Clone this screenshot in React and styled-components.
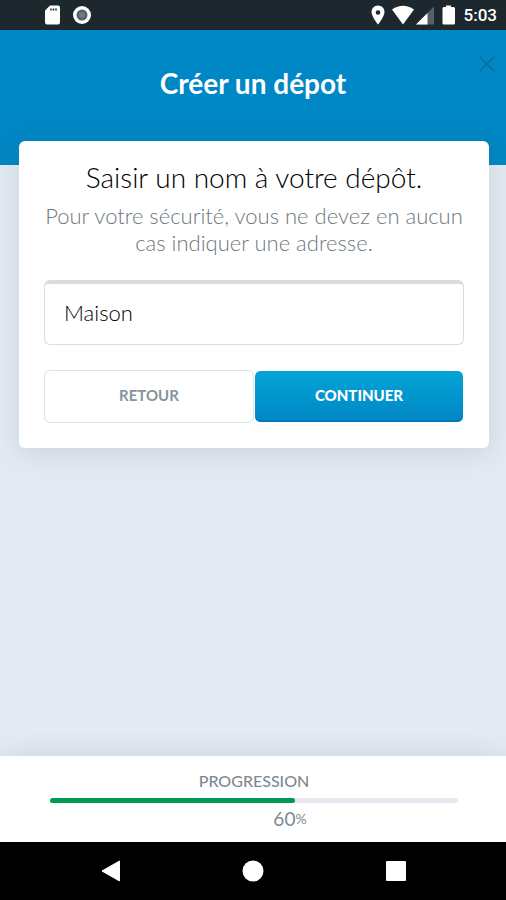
import React, { useState } from "react";
import styled, { createGlobalStyle } from "styled-components";

const GlobalStyle = createGlobalStyle`
  *, *::before, *::after { box-sizing: border-box; }
  body { margin: 0; }
  h1, h2, p { margin: 0; }
  button, input { font: inherit; }
`;

const Screen = styled.div`
  display: flex;
  flex-direction: column;
  min-height: 100vh;
  background: #e3eaf2;
  color: #000;
  font-family: Lato, "Liberation Sans", sans-serif;
`;

const StatusBar = styled.div`
  display: flex;
  align-items: center;
  justify-content: space-between;
  height: 30px;
  padding: 0 9px 0 44px;
  background: #1d272e;
  color: #fff;
`;

const StatusGroup = styled.div`
  display: flex;
  align-items: center;
  gap: ${({ $gap }) => $gap}px;
`;

const Clock = styled.time`
  margin-left: 2px;
  font: 500 17px/30px Roboto, sans-serif;
`;

const Header = styled.header`
  display: flex;
  flex-direction: column;
  height: 135px;
  padding: 20px 10px 0;
  background: #0087c5;
  color: #fff;
  text-align: center;
`;

const CloseButton = styled.button`
  display: flex;
  align-self: flex-end;
  padding: 5px 0;
  border: 0;
  background: none;
  color: #0a6b9e;
  cursor: pointer;
`;

const Title = styled.h1`
  margin-top: -13px;
  font-size: 28px;
  font-weight: 700;
  line-height: 36px;
`;

const Card = styled.main`
  margin: -24px 17px 0 19px;
  padding: 18px 25px 25px;
  border-radius: 6px;
  background: #fff;
  box-shadow: 0 4px 28px rgba(60, 84, 100, 0.16);
  text-align: center;
`;

const Question = styled.h2`
  margin: 0 -8px;
  font-size: 28px;
  font-weight: 300;
  line-height: 36px;
`;

const Hint = styled.p`
  margin: 7px -8px 0;
  color: #6c7880;
  font-size: 22px;
  font-weight: 300;
  line-height: 27px;
`;

const NameInput = styled.input`
  display: block;
  width: 100%;
  height: 65px;
  margin-top: 24px;
  padding: 0 19px 4px;
  border: 1px solid #d9dde2;
  border-top: 4px solid #d9dde1;
  border-radius: 6px;
  outline: none;
  background: #fff;
  color: #000;
  font-size: 22px;
  font-weight: 300;
`;

const Actions = styled.div`
  display: flex;
  margin-top: 25px;
`;

const ActionButton = styled.button`
  flex: 1;
  height: 53px;
  padding: 0 12px 4px;
  border: 1px solid ${({ $primary }) => ($primary ? "#fff" : "#dce3ea")};
  border-radius: 6px;
  background: ${({ $primary }) =>
    $primary ? "linear-gradient(#04a4d6, #0087c5) padding-box" : "#fff"};
  box-shadow: ${({ $primary }) => ($primary ? "inset 0 -2px 0 #0079bd" : "none")};
  color: ${({ $primary }) => ($primary ? "#fff" : "#86939a")};
  font-size: 15px;
  font-weight: ${({ $primary }) => ($primary ? 900 : 700)};
  cursor: pointer;
`;

const Footer = styled.footer`
  display: flex;
  flex-direction: column;
  align-items: center;
  height: 86px;
  margin-top: auto;
  padding: 13px 48px 0 50px;
  background: #fff;
  box-shadow: 0 0 28px rgba(60, 84, 100, 0.14);
  color: #7d8a92;
`;

const ProgressLabel = styled.div`
  font-size: 16px;
  font-weight: 500;
  line-height: 24px;
`;

const Track = styled.div`
  width: 100%;
  height: 5px;
  margin-top: 5px;
  border-radius: 3px;
  background: #e7e9f2;
`;

const Fill = styled.div`
  height: 100%;
  border-radius: 3px;
  background: #009a54;
`;

const Percent = styled.div`
  display: flex;
  align-items: center;
  margin: 4px 0 0 72px;
  font-size: 19px;
  line-height: 24px;
`;

const PercentSign = styled.span`
  font-size: 14px;
`;

const NavBar = styled.nav`
  display: flex;
  align-items: center;
  justify-content: space-between;
  height: 58px;
  padding: 0 99px 0 101px;
  background: #000;
`;

const NavButton = styled.button`
  display: flex;
  padding: 0;
  border: 0;
  background: none;
  color: #fff;
  cursor: pointer;
`;

const progress = 60;

export default function App() {
  const [name, setName] = useState("Maison");

  return (
    <Screen>
      <GlobalStyle />
      <StatusBar>
        <StatusGroup $gap={12}>
          <svg width="17" height="20" viewBox="0 0 17 20" aria-hidden="true">
            <path d="M6 0.500H14Q16 0.500 16 2.500V17Q16 19.500 14 19.500H3Q1 19.500 1 17V5.500Z" fill="#fff" />
            <path d="M7 3.500v2M9.500 3.500v2M12 3.500v2" stroke="#1d272e" strokeWidth="1.500" />
          </svg>
          <svg width="19" height="20" viewBox="0 0 19 20" aria-hidden="true">
            <circle cx="9" cy="10" r="9" fill="#fff" />
            <circle cx="9" cy="10" r="5.500" fill="#596168" />
            <circle cx="9" cy="10" r="3" fill="#737a7f" />
          </svg>
        </StatusGroup>
        <StatusGroup $gap={6}>
          <svg width="14" height="20" viewBox="0 0 14 20" aria-hidden="true">
            <path d="M7 0.500C3.300 0.500 0.500 3.400 0.500 7C0.500 11.500 7 19.500 7 19.500S13.500 11.500 13.500 7C13.500 3.400 10.700 0.500 7 0.500Z" fill="#fff" />
            <circle cx="7" cy="7.500" r="2.300" fill="#1d272e" />
          </svg>
          <StatusGroup $gap={1}>
            <svg width="24" height="20" viewBox="0 0 24 20" aria-hidden="true">
              <path d="M1 4.500Q12 -3 23 4.500L12 19.500Z" fill="#fff" />
            </svg>
            <svg width="19" height="20" viewBox="0 0 19 20" aria-hidden="true">
              <path d="M0 19.500H18V1.500Z" fill="#566068" />
              <path d="M0 19.500H11.500V8Z" fill="#fff" />
            </svg>
          </StatusGroup>
          <svg width="15" height="20" viewBox="0 0 15 20" aria-hidden="true">
            <path d="M5 0.500H10V2H12.500Q14 2 14 3.500V18Q14 19.500 12.500 19.500H3Q1.500 19.500 1.500 18V3.500Q1.500 2 3 2H5Z" fill="#fff" />
          </svg>
          <Clock>5:03</Clock>
        </StatusGroup>
      </StatusBar>

      <Header>
        <CloseButton type="button" aria-label="Fermer">
          <svg width="18" height="18" viewBox="0 0 18 18" aria-hidden="true">
            <path d="M1.500 1.500L16.500 16.500M16.500 1.500L1.500 16.500" stroke="currentColor" strokeWidth="1.500" />
          </svg>
        </CloseButton>
        <Title>Créer un dépot</Title>
      </Header>

      <Card>
        <Question id="question">Saisir un nom à votre dépôt.</Question>
        <Hint id="hint">Pour votre sécurité, vous ne devez en aucun cas indiquer une adresse.</Hint>
        <NameInput
          type="text"
          aria-labelledby="question"
          aria-describedby="hint"
          value={name}
          onChange={(event) => setName(event.target.value)}
        />
        <Actions>
          <ActionButton type="button">RETOUR</ActionButton>
          <ActionButton type="button" $primary>CONTINUER</ActionButton>
        </Actions>
      </Card>

      <Footer>
        <ProgressLabel id="progress">PROGRESSION</ProgressLabel>
        <Track role="progressbar" aria-labelledby="progress" aria-valuenow={progress}>
          <Fill style={{ width: `${progress}%` }} />
        </Track>
        <Percent>
          {progress}
          <PercentSign>%</PercentSign>
        </Percent>
      </Footer>

      <NavBar>
        <NavButton type="button" aria-label="Précédent">
          <svg width="20" height="22" viewBox="0 0 20 22" aria-hidden="true">
            <path d="M1 11L18.500 1V21Z" fill="currentColor" stroke="currentColor" strokeLinejoin="round" />
          </svg>
        </NavButton>
        <NavButton type="button" aria-label="Accueil">
          <svg width="22" height="22" viewBox="0 0 22 22" aria-hidden="true">
            <circle cx="11" cy="11" r="10.500" fill="currentColor" />
          </svg>
        </NavButton>
        <NavButton type="button" aria-label="Applications récentes">
          <svg width="22" height="22" viewBox="0 0 22 22" aria-hidden="true">
            <rect x="1" y="1" width="20" height="20" rx="1" fill="currentColor" />
          </svg>
        </NavButton>
      </NavBar>
    </Screen>
  );
}
